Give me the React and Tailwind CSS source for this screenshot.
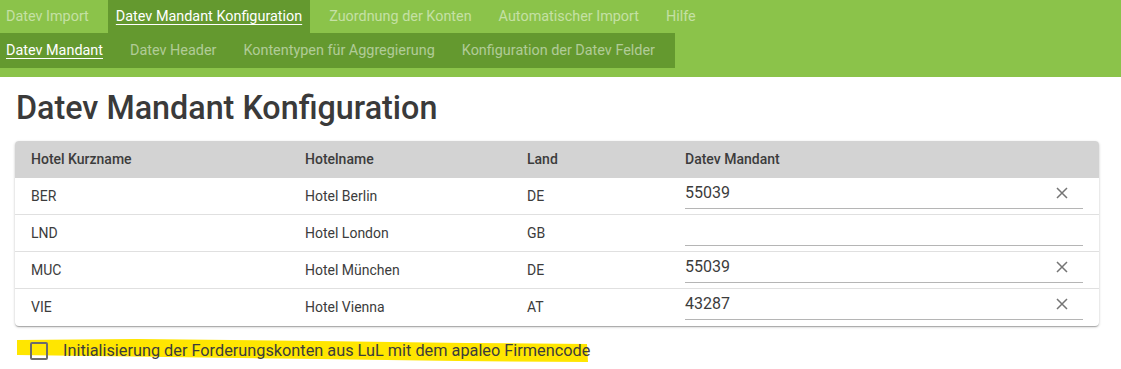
import React from "react";

const rows = [
  { k: "BER", n: "Hotel Berlin", l: "DE", v: "55039" },
  { k: "LND", n: "Hotel London", l: "GB", v: "" },
  { k: "MUC", n: "Hotel München", l: "DE", v: "55039" },
  { k: "VIE", n: "Hotel Vienna", l: "AT", v: "43287" },
];

function XIcon() {
  return (
    <svg width="12" height="12" viewBox="0 0 12 12" className="block">
      <path d="M1 1 L11 11 M11 1 L1 11" stroke="#757575" strokeWidth="1.5" fill="none" />
    </svg>
  );
}

export default function App() {
  return (
    <div className="w-[1121px] h-[369px] bg-white overflow-hidden font-['Roboto',sans-serif] text-[#3c3c3c]">
      <div className="bg-[#8bc34a] h-[77px]">
        <div className="flex h-[33px] items-stretch pl-[6px] gap-[27px] text-[14.4px] text-white/50">
          <span className="flex items-center">Datev Import</span>
          <span className="flex items-center bg-[#64992f] px-2 -mx-2 text-white underline underline-offset-[3px]">
            Datev Mandant Konfiguration
          </span>
          <span className="flex items-center">Zuordnung der Konten</span>
          <span className="flex items-center">Automatischer Import</span>
          <span className="flex items-center">Hilfe</span>
        </div>
        <div className="inline-flex h-[35px] items-center bg-[#64992f] pl-[6px] pr-[20px] gap-[27px] text-[14.4px] text-white/50">
          <span className="text-white underline underline-offset-[3px]">Datev Mandant</span>
          <span>Datev Header</span>
          <span>Kontentypen für Aggregierung</span>
          <span>Konfiguration der Datev Felder</span>
        </div>
      </div>

      <h1 className="ml-[16px] mt-[13px] text-[32.3px] leading-[36px] font-medium text-[#3a3a3a]">
        Datev Mandant Konfiguration
      </h1>

      <div className="ml-[15px] mt-[15px] w-[1084px] rounded-[4px] bg-white shadow-[0_1px_3px_rgba(0,0,0,0.2),0_1px_1px_rgba(0,0,0,0.14),0_2px_1px_-1px_rgba(0,0,0,0.12)] overflow-hidden">
        <div className="grid grid-cols-[274px_222px_158px_430px] h-[37px] items-center bg-[#d3d3d3] text-[14px] font-medium text-[#3c3c3c]">
          <span className="pl-[16px]">Hotel Kurzname</span>
          <span className="pl-[16px]">Hotelname</span>
          <span className="pl-[16px]">Land</span>
          <span className="pl-[16px]">Datev Mandant</span>
        </div>
        {rows.map((r, i) => (
          <div
            key={r.k}
            className={
              "grid grid-cols-[274px_222px_158px_430px] h-[37px] items-center text-[14px] " +
              (i < rows.length - 1 ? "border-b border-[#e0e0e0]" : "")
            }
          >
            <span className="pl-[16px]">{r.k}</span>
            <span className="pl-[16px]">{r.n}</span>
            <span className="pl-[16px]">{r.l}</span>
            <div className="pl-[16px] pr-[16px] self-start">
              <div className="flex h-[31px] items-center justify-between border-b border-[#b5b5b5] text-[16px] text-[#3c3c3c]">
                <span>{r.v}</span>
                {r.v && (
                  <span className="mr-[15px]">
                    <XIcon />
                  </span>
                )}
              </div>
            </div>
          </div>
        ))}
      </div>

      <div className="relative mt-[16px] ml-[30px] flex items-center gap-[15px] h-[18px]">
        <svg
          className="absolute left-[-13px] top-[-3px]"
          width="575"
          height="26"
          viewBox="0 0 575 26"
        >
          <path
            d="M0 1 L120 0 L300 2 L450 4 L570 5 L571 23 L440 22 L300 20 L150 18 L0 16 Z"
            fill="#ffe600"
          />
        </svg>
        <span className="relative w-[18px] h-[18px] rounded-[2px] border-2 border-[#6b6b6b]" />
        <span className="relative text-[16.3px] text-[#3c3c3c]">
          Initialisierung der Forderungskonten aus LuL mit dem apaleo Firmencode
        </span>
      </div>
    </div>
  );
}
